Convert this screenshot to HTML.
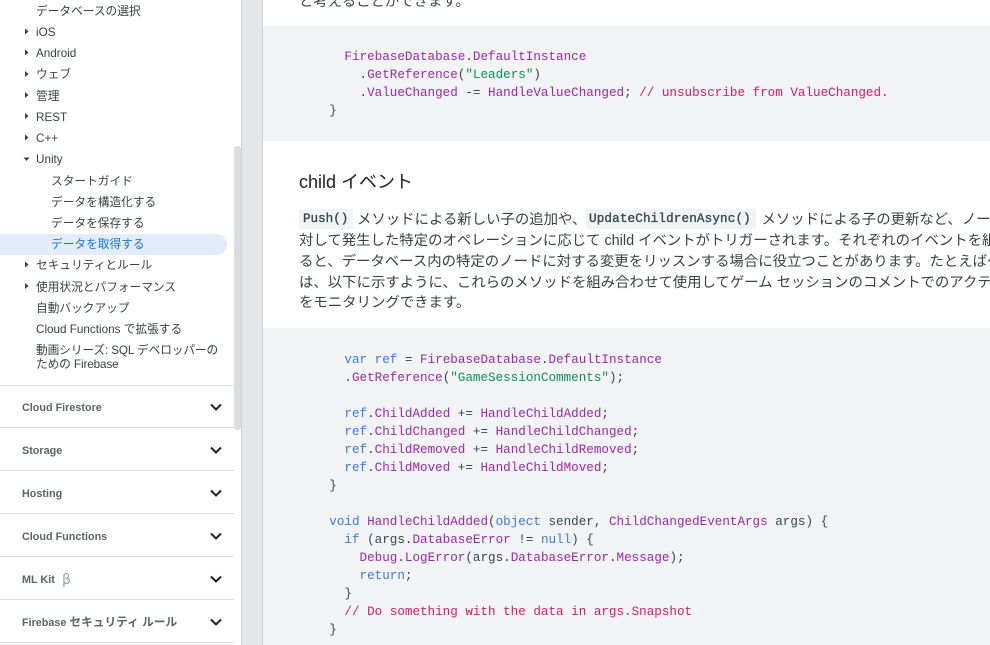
<!DOCTYPE html>
<html lang="ja"><head><meta charset="utf-8"><title>Firebase</title>
<style>
html,body{margin:0;padding:0;background:#fff}
#p{position:relative;width:990px;height:645px;overflow:hidden;background:#fff;font-family:"Liberation Sans","Noto Sans CJK JP",sans-serif;color:#202124}
#p div{position:absolute;white-space:pre}
.n{font-size:11.7px;line-height:16px;color:#3c4043;left:36px}
.s{left:51px}
.h{font-size:10.8px;font-weight:bold;line-height:16px;color:#5f6368;left:22px}
.h span{font-size:11.7px}
.l{left:0;width:234px;height:1px;background:#dadce0}
.t{left:299px;font-size:14.4px;line-height:20px;color:#3c4043}
.c{left:329.3px;font-family:"Liberation Mono",monospace;font-size:12.6px;line-height:18px;color:#37474f}
.m{background:#f1f3f4;font-family:"Liberation Mono",monospace;font-size:12.6px;color:#37474f;-webkit-text-stroke:.35px #37474f;top:209px;height:20px;line-height:20px;box-sizing:border-box}
i{font-style:normal}
.p{color:#9c27b0}.b{color:#3b78e7}.g{color:#0d904f}.r{color:#d81b60}
svg{position:absolute}
</style></head><body><div id="p">
<div style="left:241px;top:0;width:22px;height:645px;background:#e4e6e9;box-sizing:border-box;border-left:1px solid #cfd1d5;border-right:1px solid #cfd1d5"></div>
<div style="left:234px;top:146px;width:7px;height:284px;background:#dadce0;border-radius:3px"></div>

<div class="n" style="top:3.500px">データベースの選択</div>
<div class="n" style="top:25px">iOS</div>
<div class="n" style="top:46px">Android</div>
<div class="n" style="top:67px">ウェブ</div>
<div class="n" style="top:89px">管理</div>
<div class="n" style="top:110px">REST</div>
<div class="n" style="top:131px">C++</div>
<div class="n" style="top:152px">Unity</div>
<div class="n s" style="top:174px">スタートガイド</div>
<div class="n s" style="top:195px">データを構造化する</div>
<div class="n s" style="top:216px">データを保存する</div>
<div style="left:0;top:234px;width:227px;height:21px;background:#e3ecfb;border-radius:0 11px 11px 0"></div>
<div class="n s" style="top:237px;color:#1a73e8">データを取得する</div>
<div class="n" style="top:258px">セキュリティとルール</div>
<div class="n" style="top:280px">使用状況とパフォーマンス</div>
<div class="n" style="top:301px">自動バックアップ</div>
<div class="n" style="top:322px">Cloud Functions で拡張する</div>
<div class="n" style="top:343.500px;line-height:14px;letter-spacing:-.1px">動画シリーズ: SQL デベロッパーの
ための Firebase</div>

<svg style="left:0;top:0" width="240" height="645" viewBox="0 0 240 645">
<g fill="#3c4043">
<path d="M25 28.500l3.500 3-3.500 3z"/><path d="M25 49.500l3.500 3-3.500 3z"/><path d="M25 71l3.500 3-3.500 3z"/><path d="M25 92l3.500 3-3.500 3z"/><path d="M25 113l3.500 3-3.500 3z"/><path d="M25 134.500l3.500 3-3.500 3z"/>
<path d="M23.500 157.500h6l-3 3.500z"/>
<path d="M25 261.500l3.500 3-3.500 3z"/><path d="M25 283l3.500 3-3.500 3z"/>
</g>
<g fill="none" stroke="#202124" stroke-width="2">
<path d="M211 404.500l5 5 5-5"/><path d="M211 447.500l5 5 5-5"/><path d="M211 490.500l5 5 5-5"/><path d="M211 533.500l5 5 5-5"/><path d="M211 576.500l5 5 5-5"/><path d="M211 619.500l5 5 5-5"/>
</g>
</svg>

<div class="l" style="top:385px"></div>
<div class="h" style="top:400px">Cloud Firestore</div>
<div class="l" style="top:427px"></div>
<div class="h" style="top:443px">Storage</div>
<div class="l" style="top:470px"></div>
<div class="h" style="top:486px">Hosting</div>
<div class="l" style="top:513px"></div>
<div class="h" style="top:529px">Cloud Functions</div>
<div class="l" style="top:556px"></div>
<div class="h" style="top:572px">ML Kit</div>
<div style="left:62px;top:571px;font-family:'DejaVu Sans',sans-serif;font-size:14px;line-height:18px;color:#9aa0a6">β</div>
<div class="l" style="top:599px"></div>
<div class="h" style="top:615px">Firebase <span>セキュリティ ルール</span></div>
<div class="l" style="top:642px"></div>

<div class="t" style="top:-8px">と考えることができます。</div>
<div style="left:263px;top:26px;width:727px;height:115px;background:#f1f3f4"></div>
<div class="c" style="top:48px">  <i class="p">FirebaseDatabase</i>.<i class="p">DefaultInstance</i></div>
<div class="c" style="top:66px">    .<i class="p">GetReference</i>(<i class="g">"Leaders"</i>)</div>
<div class="c" style="top:84px">    .<i class="p">ValueChanged</i> -= <i class="p">HandleValueChanged</i>; <i class="r">// unsubscribe from ValueChanged.</i></div>
<div class="c" style="top:102px">}</div>

<div style="left:299px;top:170px;font-size:18px;line-height:24px;color:#202124">child イベント</div>

<div class="m" style="left:299px;width:54px;padding-left:4px">Push()</div>
<div class="t" style="left:357px;top:210px">メソッドによる新しい子の追加や、</div>
<div class="m" style="left:586px;width:170px;padding-left:3px;letter-spacing:.15px">UpdateChildrenAsync()</div>
<div class="t" style="left:761.500px;top:210px">メソッドによる子の更新など、ノード</div>
<div class="t" style="top:231px">対して発生した特定のオペレーションに応じて child イベントがトリガーされます。それぞれのイベントを組み</div>
<div class="t" style="top:252px">ると、データベース内の特定のノードに対する変更をリッスンする場合に役立つことがあります。たとえばゲ</div>
<div class="t" style="top:273px">は、以下に示すように、これらのメソッドを組み合わせて使用してゲーム セッションのコメントでのアクテ</div>
<div class="t" style="top:293px">をモニタリングできます。</div>

<div style="left:263px;top:328px;width:727px;height:317px;background:#f1f3f4"></div>
<div class="c" style="top:351px">  <i class="b">var</i> <i class="b">ref</i> = <i class="p">FirebaseDatabase</i>.<i class="p">DefaultInstance</i></div>
<div class="c" style="top:369px">  .<i class="p">GetReference</i>(<i class="g">"GameSessionComments"</i>);</div>
<div class="c" style="top:405px">  <i class="b">ref</i>.<i class="p">ChildAdded</i> += <i class="p">HandleChildAdded</i>;</div>
<div class="c" style="top:423px">  <i class="b">ref</i>.<i class="p">ChildChanged</i> += <i class="p">HandleChildChanged</i>;</div>
<div class="c" style="top:441px">  <i class="b">ref</i>.<i class="p">ChildRemoved</i> += <i class="p">HandleChildRemoved</i>;</div>
<div class="c" style="top:459px">  <i class="b">ref</i>.<i class="p">ChildMoved</i> += <i class="p">HandleChildMoved</i>;</div>
<div class="c" style="top:477px">}</div>
<div class="c" style="top:513px"><i class="b">void</i> <i class="p">HandleChildAdded</i>(<i class="b">object</i> sender, <i class="p">ChildChangedEventArgs</i> args) {</div>
<div class="c" style="top:531px">  <i class="b">if</i> (args.<i class="p">DatabaseError</i> != <i class="b">null</i>) {</div>
<div class="c" style="top:549px">    <i class="p">Debug</i>.<i class="p">LogError</i>(args.<i class="p">DatabaseError</i>.<i class="p">Message</i>);</div>
<div class="c" style="top:567px">    <i class="b">return</i>;</div>
<div class="c" style="top:585px">  }</div>
<div class="c" style="top:603px">  <i class="r">// Do something with the data in args.Snapshot</i></div>
<div class="c" style="top:621px">}</div>
</div></body></html>
